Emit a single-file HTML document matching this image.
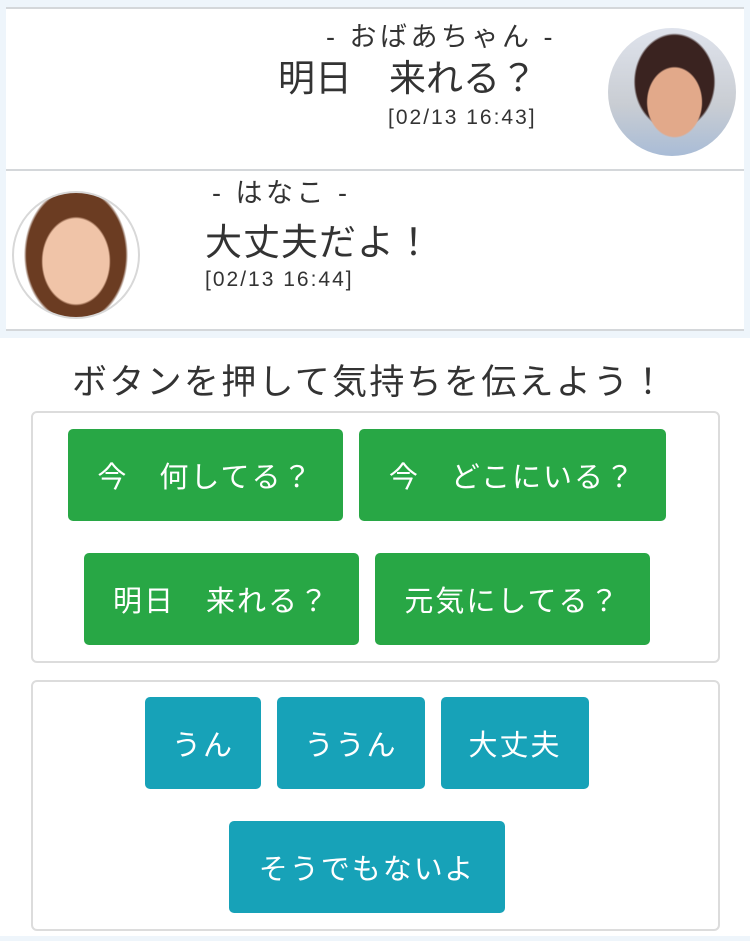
<!DOCTYPE html>
<html><head><meta charset="utf-8"><style>
*{margin:0;padding:0;box-sizing:border-box}
body{width:750px;height:941px;background:#eef5fb;font-family:"Liberation Sans","Noto Sans CJK JP",sans-serif;color:#333;position:relative;overflow:hidden}
.abs{position:absolute}
.row{position:absolute;left:6px;width:738px;background:#fff}
.line{position:absolute;left:6px;width:738px;height:2px;background:#d4d7da}
.t{position:absolute;white-space:nowrap;line-height:1}
.box{position:absolute;left:31px;width:689px;border:2px solid #dcdcdc;border-radius:6px;background:#fff}
.b{position:absolute;border-radius:5px;color:#fff;font-size:29px;letter-spacing:2px;display:flex;align-items:center;justify-content:center;white-space:nowrap}
.g{background:#28a745}.c{background:#17a2b8}
</style></head><body>
<div class="line" style="top:7px"></div>
<div class="row" style="top:9px;height:161px"></div>
<div class="line" style="top:169px"></div>
<div class="row" style="top:171px;height:159px"></div>
<div class="line" style="top:329px"></div>
<div class="abs" style="left:0;top:338px;width:750px;height:598px;background:#fff"></div>

<div class="t" style="left:326px;top:24px;font-size:27px;letter-spacing:3.5px">- おばあちゃん -</div>
<div class="t" style="left:278px;top:60px;font-size:37px">明日　来れる？</div>
<div class="t" style="left:388px;top:107px;font-size:21px;letter-spacing:2px">[02/13 16:43]</div>
<div class="abs" style="left:608px;top:28px;width:128px;height:128px;border-radius:50%;background:radial-gradient(ellipse 22% 28% at 52% 58%,#e2a98a 0 95%,transparent 100%),radial-gradient(ellipse 32% 38% at 52% 42%,#3a2320 0 95%,transparent 100%),linear-gradient(#dfe3ec,#c9cdd3 60%,#a9bcd6)"></div>

<div class="abs" style="left:12px;top:191px;width:128px;height:128px;border-radius:50%;border:2px solid #d8d8d8;background:radial-gradient(ellipse 28% 36% at 50% 55%,#f0c4a8 0 95%,transparent 100%),radial-gradient(ellipse 42% 55% at 50% 50%,#6b3c22 0 95%,transparent 100%),#fff"></div>
<div class="t" style="left:212px;top:180px;font-size:27px;letter-spacing:3.5px">- はなこ -</div>
<div class="t" style="left:205px;top:224px;font-size:37px;letter-spacing:1px">大丈夫だよ！</div>
<div class="t" style="left:205px;top:269px;font-size:21px;letter-spacing:2px">[02/13 16:44]</div>

<div class="t" style="left:72px;top:365px;font-size:35px;letter-spacing:2.3px">ボタンを押して気持ちを伝えよう！</div>

<div class="box" style="top:411px;height:252px"></div>
<div class="b g" style="left:68px;top:429px;width:275px;height:92px">今　何してる？</div>
<div class="b g" style="left:359px;top:429px;width:307px;height:92px">今　どこにいる？</div>
<div class="b g" style="left:84px;top:553px;width:275px;height:92px">明日　来れる？</div>
<div class="b g" style="left:375px;top:553px;width:275px;height:92px">元気にしてる？</div>

<div class="box" style="top:680px;height:251px"></div>
<div class="b c" style="left:145px;top:697px;width:116px;height:92px">うん</div>
<div class="b c" style="left:277px;top:697px;width:148px;height:92px">ううん</div>
<div class="b c" style="left:441px;top:697px;width:148px;height:92px">大丈夫</div>
<div class="b c" style="left:229px;top:821px;width:276px;height:92px">そうでもないよ</div>
</body></html>
